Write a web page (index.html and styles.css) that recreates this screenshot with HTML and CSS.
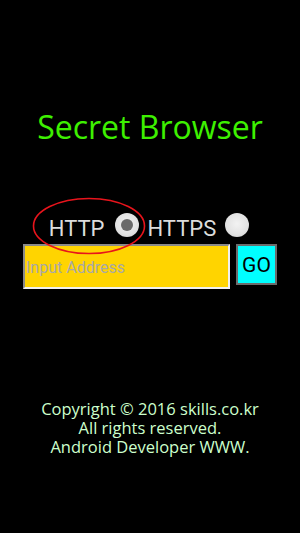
FILE: index.html
```html
<!DOCTYPE html>
<html>
<head>
<meta charset="utf-8">
<link rel="stylesheet" href="styles.css">
</head>
<body>
<div class="screen">
  <h1 class="title">Secret Browser</h1>
  <div class="proto-row">
    <div class="proto">
      <span class="proto-label">HTTP</span>
      <span class="radio checked"><span class="dot"></span></span>
      <svg class="mark" viewBox="0 0 114 58" width="114" height="58"><ellipse cx="57" cy="29" rx="55.5" ry="27.5" fill="none" stroke="#e8141c" stroke-width="1.6"/></svg>
    </div>
    <div class="proto">
      <span class="proto-label">HTTPS</span>
      <span class="radio"></span>
    </div>
  </div>
  <div class="address-row">
    <div class="address"><span class="placeholder">Input Address</span></div>
    <button class="go">GO</button>
  </div>
  <div class="footer">
    <div>Copyright © 2016 skills.co.kr</div>
    <div>All rights reserved.</div>
    <div>Android Developer WWW.</div>
  </div>
</div>
</body>
</html>
```

FILE: styles.css
```css
html, body {
  margin: 0;
  padding: 0;
  background: #000;
}
.screen {
  width: 300px;
  height: 533px;
  display: flex;
  flex-direction: column;
  align-items: center;
  background: #000;
}
.title {
  margin: 106px 0 0 0;
  font-family: "Open Sans", "DejaVu Sans", sans-serif;
  font-weight: 400;
  font-size: 32px;
  line-height: 42px;
  color: #3ef000;
}
.proto-row {
  margin-top: 64px;
  height: 26px;
  display: flex;
  align-items: center;
  margin-right: 2px;
}
.proto {
  position: relative;
  display: flex;
  align-items: center;
}
.proto + .proto {
  margin-left: 8px;
}
.proto-label {
  font-family: Roboto, "Liberation Sans", sans-serif;
  font-size: 22px;
  line-height: 26px;
  color: #dcdcdc;
  position: relative;
  top: 4px;
}
.radio {
  margin-left: 11px;
  width: 24px;
  height: 24px;
  border-radius: 50%;
  background: radial-gradient(circle at 50% 45%, #f2f2f2 0%, #e2e2e2 60%, #c9c9c9 100%);
  display: flex;
  align-items: center;
  justify-content: center;
}
.proto + .proto .radio {
  margin-left: 9px;
}
.dot {
  width: 12px;
  height: 12px;
  border-radius: 50%;
  background: #6a6a6a;
}
.mark {
  position: absolute;
  left: -17px;
  top: -15px;
  pointer-events: none;
}
.address-row {
  margin-top: 6px;
  display: flex;
  align-items: flex-start;
  gap: 6px;
}
.address {
  width: 202px;
  height: 41px;
  background: #ffd400;
  border-style: solid;
  border-width: 2px;
  border-color: #8a8a8a #f0f0f0 #f0f0f0 #8a8a8a;
  display: flex;
  align-items: center;
  padding-left: 1px;
}
.placeholder {
  font-family: Roboto, "Liberation Sans", sans-serif;
  font-size: 16px;
  color: #a8a8a8;
  margin-top: 1px;
}
.go {
  width: 41px;
  height: 41px;
  margin: 0;
  padding: 0;
  background: #00ffff;
  border: 2px solid #6c6c6c;
  font-family: Roboto, "Liberation Sans", sans-serif;
  font-size: 21px;
  color: #000;
}
.footer {
  margin-top: 110px;
  text-align: center;
  font-family: "Open Sans", "DejaVu Sans", sans-serif;
  font-size: 16.5px;
  line-height: 19px;
  color: #ccffcc;
}
```
